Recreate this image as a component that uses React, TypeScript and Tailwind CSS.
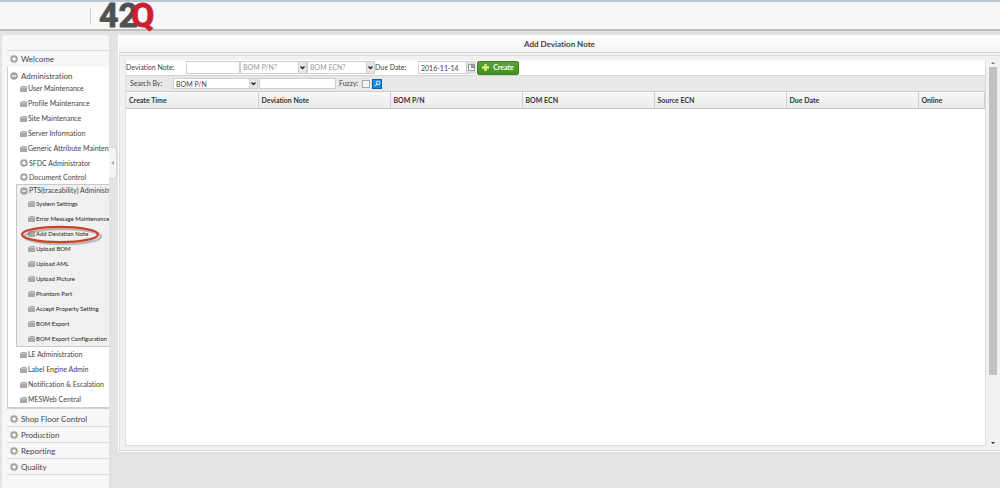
import type { ReactNode } from 'react'

const PTS_ITEMS = [
  'System Settings',
  'Error Message Maintenance',
  'Add Deviation Note',
  'Upload BOM',
  'Upload AML',
  'Upload Picture',
  'Phantom Part',
  'Accept Property Setting',
  'BOM Export',
  'BOM Export Configuration',
]

const ADMIN_TOP = [
  'User Maintenance',
  'Profile Maintenance',
  'Site Maintenance',
  'Server Information',
  'Generic Attribute Maintenance',
]

const ADMIN_BOTTOM = ['LE Administration', 'Label Engine Admin', 'Notification & Escalation', 'MESWeb Central']

const SECTIONS = ['Shop Floor Control', 'Production', 'Reporting', 'Quality']

const COLUMNS = ['Create Time', 'Deviation Note', 'BOM P/N', 'BOM ECN', 'Source ECN', 'Due Date', 'Online']

function Folder() {
  return (
    <svg className="h-2 w-[7px] shrink-0" viewBox="0 0 7 8" aria-hidden="true">
      <path d="M0 2h1l1-1h4l1 1v5H0z" fill="#a9a9a9" />
      <path d="M1 2.5h5" stroke="#dedede" strokeWidth="0.6" />
    </svg>
  )
}

function Toggle({ open = false }: { open?: boolean }) {
  return (
    <svg className="size-2 shrink-0" viewBox="0 0 8 8" aria-hidden="true">
      <circle cx="4" cy="4" r="3.8" fill="#a3a3a3" />
      <path d={open ? 'M2 4h4' : 'M2 4h4M4 2v4'} stroke="#fff" strokeWidth="1.3" />
    </svg>
  )
}

function Leaf({ label, marked = false }: { label: string; marked?: boolean }) {
  return (
    <li className="relative h-[15px]">
      <a href="#" className="flex h-full items-center gap-px whitespace-nowrap">
        <Folder />
        {label}
      </a>
      {marked && (
        <svg className="absolute -left-2 -top-1 h-6 w-[84px]" viewBox="0 0 84 24" fill="none" aria-hidden="true">
          <ellipse cx="43" cy="14.5" rx="38" ry="7.5" stroke="#666" strokeOpacity="0.4" strokeWidth="2.6" />
          <ellipse cx="40" cy="12.5" rx="38" ry="7.6" stroke="#c8452a" strokeWidth="2.2" />
        </svg>
      )}
    </li>
  )
}

function Section({ label, open = false, className }: { label: string; open?: boolean; className: string }) {
  return (
    <button
      type="button"
      aria-expanded={open}
      className={`flex w-full items-center gap-[3px] whitespace-nowrap text-[8px] ${className}`}
    >
      <Toggle open={open} />
      {label}
    </button>
  )
}

function Branch({ label, open = false, className }: { label: string; open?: boolean; className: string }) {
  return (
    <button type="button" aria-expanded={open} className={`flex items-center gap-px whitespace-nowrap ${className}`}>
      <Toggle open={open} />
      {label}
    </button>
  )
}

function Sidebar() {
  return (
    <nav className="relative w-[107px] shrink-0 rounded-t bg-[#f7f7f7] pl-[5px] text-[7px] text-[#444]">
      <div className="h-4 border-b border-[#dcdcdc]" />
      <div className="overflow-hidden">
        <Section label="Welcome" className="h-4 pl-[3px]" />
        <div className="mb-[2px] border-b-2 border-l border-[#cfcfcf] bg-white pt-[3px]">
          <Section label="Administration" open className="h-[11px] pl-[2px]" />
          <ul className="pl-3">
            {ADMIN_TOP.map((item) => (
              <Leaf key={item} label={item} />
            ))}
            <li>
              <Branch label="SFDC Administrator" className="h-[14px]" />
            </li>
            <li>
              <Branch label="Document Control" className="h-[14px]" />
            </li>
          </ul>
          <div className="ml-2 border border-r-0 border-[#c9c9c9] bg-[#f0f0f0] pl-[3px]">
            <Branch label="PTS(traceability) Administration" open className="h-[11px]" />
            <ul className="pl-2 text-[6px] text-[#222]">
              {PTS_ITEMS.map((item) => (
                <Leaf key={item} label={item} marked={item === 'Add Deviation Note'} />
              ))}
            </ul>
          </div>
          <ul className="pl-3">
            {ADMIN_BOTTOM.map((item) => (
              <Leaf key={item} label={item} />
            ))}
          </ul>
        </div>
        {SECTIONS.map((item) => (
          <Section key={item} label={item} className="h-4 border-b border-[#dcdcdc] pl-[3px]" />
        ))}
      </div>
      <button
        type="button"
        aria-label="Collapse menu"
        className="absolute -right-2 top-28 flex h-8 w-2 items-center justify-center rounded-r border border-l-0 border-[#d5d5d5] bg-[#f5f5f5]"
      >
        <svg className="h-1 w-[3px]" viewBox="0 0 3 4" aria-hidden="true">
          <path d="M3 0v4L0 2z" fill="#aaa" />
        </svg>
      </button>
    </nav>
  )
}

function Arrow() {
  return (
    <span className="pointer-events-none absolute inset-y-0 right-0 flex w-[9px] items-center justify-center border border-[#cfcfcf] bg-[#e6e6e6]">
      <svg className="h-1 w-[5px]" viewBox="0 0 5 4" aria-hidden="true">
        <path d="M0.5 0.5l2 2 2-2" stroke="#222" strokeWidth="1.3" fill="none" />
      </svg>
    </span>
  )
}

function Picker({
  id,
  label,
  children,
  className,
}: {
  id: string
  label?: string
  children: ReactNode
  className: string
}) {
  return (
    <div className={`relative shrink-0 ${className}`}>
      <select
        id={id}
        aria-label={label}
        className="block h-full w-full appearance-none border border-[#cfcfcf] bg-white pl-[2px]"
      >
        {children}
      </select>
      <Arrow />
    </div>
  )
}

function Toolbar() {
  return (
    <form className="text-[7px] text-[#444]">
      <div className="flex h-[15px] items-center">
        <label htmlFor="note" className="w-[60px] shrink-0">
          Deviation Note:
        </label>
        <input id="note" className="h-[13px] w-[54px] shrink-0 border border-[#cfcfcf] bg-white px-1" />
        <Picker id="bom-pn" label="BOM P/N" className="h-[13px] w-[67px] text-[#999]">
          <option>BOM P/N?</option>
        </Picker>
        <Picker id="bom-ecn" label="BOM ECN" className="h-[13px] w-[68px] text-[#999]">
          <option>BOM ECN?</option>
        </Picker>
        <label htmlFor="due" className="w-[43px] shrink-0">
          Due Date:
        </label>
        <input
          id="due"
          defaultValue="2016-11-14"
          className="h-[13px] w-[49px] shrink-0 border border-[#cfcfcf] bg-white px-[2px]"
        />
        <button
          type="button"
          aria-label="Pick date"
          className="flex h-[13px] w-[9px] items-center justify-center bg-[#dedede]"
        >
          <svg className="size-[7px]" viewBox="0 0 7 7" aria-hidden="true">
            <path d="M0.5 0.5h6v6h-6z" stroke="#999" fill="#f4f4f4" />
            <path d="M3 1h3v3H3z" fill="#999" />
          </svg>
        </button>
        <button
          type="button"
          className="ml-px flex h-[14px] w-[42px] items-center justify-center gap-1 rounded-xs border border-[#3c7f1b] bg-linear-to-b from-[#5aa636] to-[#438f20] font-bold text-white"
        >
          <svg className="size-[7px]" viewBox="0 0 7 7" aria-hidden="true">
            <path d="M3.5 0v7M0 3.5h7" stroke="#d4ee7c" strokeWidth="2.4" />
          </svg>
          Create
        </button>
      </div>
      <div className="flex h-4 items-center border-t border-[#d4d4d4] bg-[#e8e8e8] pl-1">
        <label htmlFor="field" className="w-[43px] shrink-0">
          Search By:
        </label>
        <Picker id="field" className="h-[11px] w-[85px]">
          <option>BOM P/N</option>
        </Picker>
        <input aria-label="Search text" className="ml-px h-[11px] w-[77px] border border-[#cfcfcf] bg-white px-1" />
        <label htmlFor="fuzzy" className="ml-[3px] w-[23px] shrink-0">
          Fuzzy:
        </label>
        <input id="fuzzy" type="checkbox" className="size-2 appearance-none border border-[#aaa] bg-[#f4f4f4]" />
        <button
          type="button"
          aria-label="Search"
          className="ml-[2px] flex size-[10px] items-center justify-center border border-[#0b5fa8] bg-[#1a8be0]"
        >
          <svg className="size-[7px]" viewBox="0 0 7 7" fill="none" aria-hidden="true">
            <circle cx="4.2" cy="2.8" r="1.8" stroke="#fff" strokeWidth="0.9" />
            <path d="M3 4L1 6" stroke="#fff" />
          </svg>
        </button>
      </div>
    </form>
  )
}

function NoteTable() {
  return (
    <table className="w-full table-fixed border-collapse text-left text-[7px] text-[#333]">
      <thead>
        <tr className="h-[17px] bg-linear-to-b from-[#f8f8f8] to-[#e9eaeb]">
          {COLUMNS.map((column) => (
            <th key={column} className="w-[132px] border border-l-0 border-[#cdcdcd] px-[3px] py-0 font-bold last:w-auto">
              {column}
            </th>
          ))}
        </tr>
      </thead>
    </table>
  )
}

function ScrollRail() {
  return (
    <div className="flex w-[14px] shrink-0 flex-col items-center bg-[#f1f1f1] py-[5px]" aria-hidden="true">
      <svg className="size-1 shrink-0" viewBox="0 0 4 4">
        <path d="M2 1l2 2H0z" fill="#777" />
      </svg>
      <div className="mt-[2px] w-2 grow-[306] bg-[#c1c1c1]" />
      <div className="grow-[66]" />
      <svg className="size-1 shrink-0" viewBox="0 0 4 4">
        <path d="M0 1h4L2 3z" fill="#222" />
      </svg>
    </div>
  )
}

function Logo() {
  return (
    <svg className="ml-2 h-[29px] w-14 overflow-visible" viewBox="0 0 56 29" role="img" aria-label="42Q">
      <g fontFamily="Roboto, sans-serif" fontWeight="bold" fontSize="34" strokeWidth="0.8">
        <text x="0" y="26" fill="#4f5154" stroke="#4f5154">
          42
        </text>
        <text x="32" y="26" fill="#cc1f2f" stroke="#cc1f2f">
          Q
        </text>
      </g>
    </svg>
  )
}

export default function App() {
  return (
    <div className="flex min-h-screen flex-col bg-[#e3e3e3] font-[Lato,'Liberation_Sans',sans-serif] [font-variant-ligatures:none]">
      <header className="flex h-[31px] items-center border-b-2 border-t-2 border-t-[#bcc6d3] border-b-[#bebebe] bg-[#f8f8f8] pl-[90px]">
        <div className="h-4 w-px bg-[#cfcfcf]" />
        <Logo />
      </header>
      <div className="flex grow pl-[2px] pt-1">
        <Sidebar />
        <main className="mb-9 ml-[9px] flex min-w-0 grow flex-col border border-r-0 border-white bg-[#f1f1f1]">
          <h1 className="flex h-[17px] items-center justify-center border-b border-[#d0d0d0] bg-linear-to-b from-white to-[#f2f2f2] text-[8px] font-bold text-[#444]">
            Add Deviation Note
          </h1>
          <div className="mt-[2px] flex grow border border-r-0 border-[#dcdcdc] pl-[5px]">
            <div className="my-1 flex min-w-0 grow flex-col border-x border-b border-[#dedede] bg-white">
              <Toolbar />
              <NoteTable />
            </div>
            <ScrollRail />
          </div>
        </main>
      </div>
    </div>
  )
}
